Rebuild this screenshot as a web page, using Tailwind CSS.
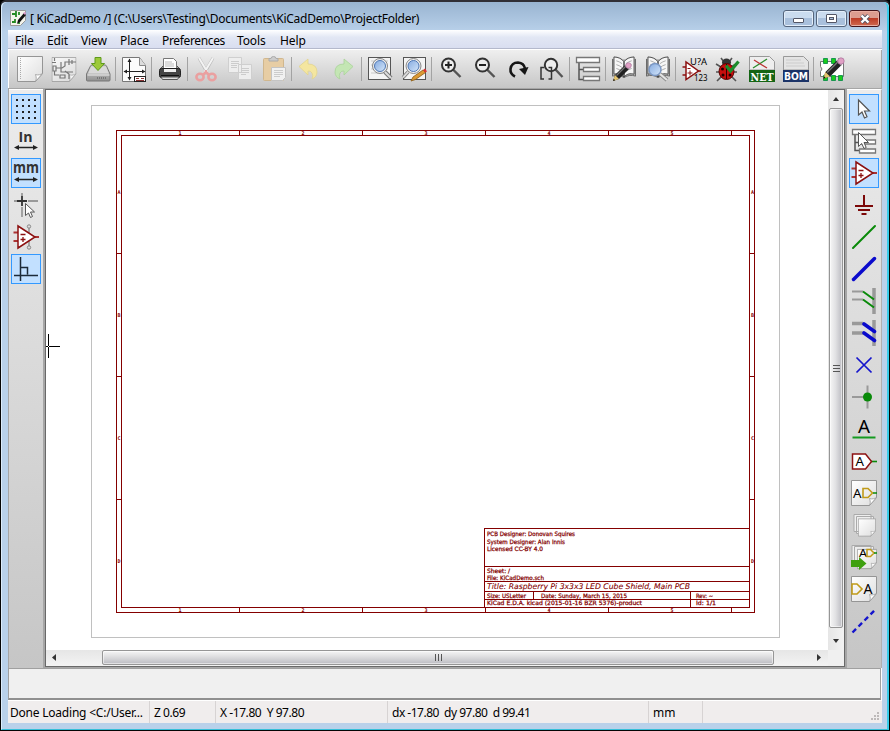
<!DOCTYPE html>
<html lang="en">
<head>
<meta charset="utf-8">
<title>[ KiCadDemo /]</title>
<script src="https://cdn.jsdelivr.net/npm/@tailwindcss/browser@4"></script>
</head>
<body class="w-[890px] h-[731px] overflow-hidden bg-black font-['Noto_Sans','Open_Sans',sans-serif] text-[12px] leading-4 text-black">
<svg width="0" height="0" class="absolute">
  <defs>
    <linearGradient id="pg" x1="0" y1="0" x2="1" y2="1"><stop offset="0" stop-color="#fff"/><stop offset="1" stop-color="#dedede"/></linearGradient>
    <linearGradient id="lens" x1="0" y1="0" x2="1" y2="1"><stop offset="0" stop-color="#86abe0"/><stop offset="1" stop-color="#d4e6fa"/></linearGradient>
    <linearGradient id="metal" x1="0" y1="0" x2="0" y2="1"><stop offset="0" stop-color="#d8d8d8"/><stop offset="1" stop-color="#909090"/></linearGradient>
    <symbol id="page" viewBox="0 0 26 26"><path d="M.5.5h25v17l-7 8H.5z" fill="url(#pg)" stroke="#959595"/><path d="M18.500 25.500c1-2 1-4 0-7 3 1 5 0 7-1z" fill="#fff" stroke="#999" stroke-width=".8"/></symbol>
    <symbol id="pencil" viewBox="0 0 20 20"><path d="M1 19l2-6 10-10 4 4L7 17z" fill="#222"/><path d="M4.500 13.500L13.500 4.500" stroke="#777" stroke-width="1.200"/><path d="M1 19l2-6 4 4z" fill="#e4c46e"/><path d="M1 19l.8-2.200 1.400 1.400z" fill="#111"/><path d="M12.500 3.500l4 4 1-1-4-4z" fill="#999"/><circle cx="16.500" cy="3.500" r="2.800" fill="#e0a0c4" stroke="#a8709a" stroke-width=".6"/></symbol>
    <symbol id="opamp" viewBox="0 0 26 26"><path d="M.5 8.500h5M.5 17h5M21 13h5" stroke="#a33" stroke-width="2"/><path d="M5 2v22L22 13z" fill="#fff" stroke="#8c1111" stroke-width="1.500"/><path d="M7.500 10.500h5M7.500 15.500h5M10 13v5" stroke="#8c1111" stroke-width="1.300"/></symbol>
    <symbol id="book" viewBox="0 0 26 24"><path d="M1 3v18c4-1.500 8-1 12 1.500 4-2.500 8-3 12-1.500V3" fill="#bbb" stroke="#666"/><path d="M2.500 1C7 1 11 3 13 6v16C10 18.500 6.500 18 2.500 19zM23.500 1C19 1 15 3 13 6v16c3-3.500 6.500-4 10.500-3z" fill="#f6f6f6" stroke="#444"/><path d="M5 5c2 .5 4 1.500 6 3M5 9c2 .5 4 1.500 6 3M5 13c2 .5 4 1.500 6 3M21 5c-2 .5-4 1.500-6 3M21 9c-2 .5-4 1.500-6 3M21 13c-2 .5-4 1.500-6 3" fill="none" stroke="#aaa"/></symbol>
  </defs>
</svg>

<div class="w-[890px] h-[731px] flex flex-col rounded-t-md border border-[#050505] border-t-[#302f36] border-t-2 bg-[#b9d1ea] overflow-hidden">
  <div class="flex-1 min-h-0 flex flex-col border-l border-[#dcecfb] border-r-2 border-r-[#38cdea] border-b border-b-[#35bfd8] rounded-t-md bg-linear-to-b from-[#99b4d1] to-[#b9d1ea] to-[30px] overflow-hidden">

    <!-- Title bar -->
    <header class="h-7 shrink-0 flex items-start pl-2">
      <svg class="mt-[8px]" width="16" height="16" viewBox="0 0 16 16"><path d="M.5.500h15v10l-5 5H.5z" fill="#f4f4ec" stroke="#999"/><path d="M2 4h4v3M6 3V1M2 12h3V9M9 14v-3M9 2v3" fill="none" stroke="#238a23" stroke-width="1.800"/><path d="M7 14l1-4 6-7 2 2-6 7z" fill="#111"/><path d="M13 3l2 2 1-2-1-1z" fill="#d9c"/></svg>
      <span class="mt-[9px] ml-[4px] text-[12px] whitespace-pre tracking-[-0.26px]">[ KiCadDemo /] (C:\Users\Testing\Documents\KiCadDemo\ProjectFolder)</span>
      <div class="ml-auto mt-[8px] mr-[7px] flex gap-[2px]">
        <div class="w-[31px] h-[17px] rounded-[3px] border border-[#55657c] bg-linear-to-b from-[#cbdcef] from-50% to-[#a9c0dc] to-50% shadow-[inset_0_0_0_1px_#e3eefa] flex items-center justify-center"><i class="block mt-1 w-[11px] h-[5px] rounded-[1px] bg-white border border-[#535666]"></i></div>
        <div class="w-[31px] h-[17px] rounded-[3px] border border-[#55657c] bg-linear-to-b from-[#cbdcef] from-50% to-[#a9c0dc] to-50% shadow-[inset_0_0_0_1px_#e3eefa] flex items-center justify-center"><i class="block w-[11px] h-[9px] rounded-[1px] bg-white border border-[#535666] p-[2px]"><b class="block w-[5px] h-[3px] border border-[#535666] bg-[#a9c0dc]"></b></i></div>
        <div class="w-[31px] h-[17px] rounded-[3px] border border-[#43141a] bg-linear-to-b from-[#dc9d90] from-45% via-[#bd3c26] via-50% to-[#cf6a50] shadow-[inset_0_0_0_1px_#e9b0a4] flex items-center justify-center"><svg width="12" height="10" viewBox="0 0 12 10"><path d="M2.500 1.500l7 7M9.500 1.500l-7 7" stroke="#535666" stroke-width="4"/><path d="M2.500 1.500l7 7M9.500 1.500l-7 7" stroke="#fff" stroke-width="2.400"/></svg></div>
      </div>
    </header>

    <main class="ml-[6px] mr-[5px] mb-[6px] flex-1 min-h-0 flex flex-col bg-white">
      <!-- Menu bar -->
      <nav class="h-[19px] shrink-0 flex pl-[7px] pt-[2px] bg-linear-to-b from-white via-[#e2e7f4] via-40% to-[#d9def0] border-b border-[#b4b9cc] whitespace-nowrap leading-[17px] tracking-[-0.12px]">
        <span class="w-[32px]">File</span><span class="w-[34px]">Edit</span><span class="w-[39px]">View</span><span class="w-[42px]">Place</span><span class="w-[75px] tracking-[-0.35px]">Preferences</span><span class="w-[43px]">Tools</span><span>Help</span>
      </nav>
      <!-- Top toolbar -->
      <div class="h-[38px] mt-[1px] ml-px shrink-0 flex items-center pl-1 bg-linear-to-b from-[#efefef] to-[#c6c6c6] border-r border-[#a8a8a8]">
        <svg class="mx-1" width="26" height="26" viewBox="17 56 26 26"><use href="#page" x="17" y="56" width="26" height="26"/><path d="M20.500 58v22" stroke="#aaa" stroke-dasharray="1 1"/></svg>
        <svg class="mx-1" width="26" height="26" viewBox="51 56 26 26"><g opacity=".75"><use href="#page" x="51.500" y="57" width="25" height="25"/><path d="M52 62.500h4M54.500 58v3M53 66h3v5h-3zM54.500 71v4H59M56 68h6l3-2v-4h4M60 75h5v3h-5zM65 71l4 3v5M69 59v6M72 60v4M69 62h7M61 62v10h12" fill="none" stroke="#555" stroke-width="1.200"/></g></svg>
        <svg class="mx-1" width="26" height="26" viewBox="85 56 26 26"><path d="M86.500 74l4-8q.5-1 1.500-1h13q1 0 1.500 1l3.500 8v6q0 1-1 1h-21.500q-1 0-1-1z" fill="url(#metal)" stroke="#777"/><path d="M88 73.500h21l-3-6.500H91z" fill="#d9d9d9"/><path d="M87.500 75h22" stroke="#eee"/><path d="M97 78h10" stroke="#777" stroke-dasharray="1 1" stroke-width="2"/><path d="M95 57.500h6v6h3.500L98 70.500l-6.500-7H95z" fill="#9cc93a" stroke="#5f9a1c"/></svg>
        <i class="w-[2px] h-6 border-l border-[#a3a3a3]"></i>
        <svg class="mx-1" width="26" height="26" viewBox="121 56 26 26"><path d="M122.500 57.500h17l6 8v16h-23z" fill="#fcfcfc" stroke="#777"/><path d="M139.500 57.500v8h6" fill="#ddd" stroke="#888"/><path d="M129.500 59v20M124 71.500h21" stroke="#222"/><path d="M127.500 62l2-3.500 2 3.500zM127.500 77l2 3.500 2-3.500zM127 69.500l-3.500 2 3.500 2zM142 69.500l3.500 2-3.500 2z" fill="#222"/><rect x="134.500" y="76.500" width="11" height="5" fill="#fff" stroke="#222"/><path d="M136 78.500h3M141 78.500h3M136 80.500h8" stroke="#833"/></svg>
        <i class="w-[2px] h-6 border-l border-[#a3a3a3]"></i>
        <svg class="mx-1" width="26" height="26" viewBox="157 56 26 26"><path d="M160 69l3-3h14l3 3" fill="#999" stroke="#555"/><path d="M163.500 58.500h10l3 3V70h-13z" fill="#fff" stroke="#777"/><path d="M165 62h7M165 64h9M165 66h9" stroke="#bbb"/><rect x="159.500" y="68.500" width="21" height="9" rx="2" fill="#444" stroke="#222"/><rect x="164" y="69" width="12" height="3" fill="#eee"/><path d="M161 77h18l-1.500 2.500h-15z" fill="#ddd" stroke="#555"/><path d="M161 75.500h18" stroke="#111"/></svg>
        <i class="w-[2px] h-6 border-l border-[#a3a3a3]"></i>
        <svg class="mx-1" width="26" height="26" viewBox="193 56 26 26"><path d="M199 58l9 16M213 58l-9 16" stroke="#bbb" stroke-width="3"/><path d="M199 58l9 15M213 58l-9 15" stroke="#f3f3f3" stroke-width="2"/><g fill="none" stroke="#eaa0a0" stroke-width="2.600"><ellipse cx="200" cy="77" rx="3.600" ry="3.200"/><ellipse cx="212" cy="77" rx="3.600" ry="3.200"/><path d="M203 75l4-4M209 75l-4-4"/></g></svg>
        <svg class="mx-1" width="26" height="26" viewBox="227 56 26 26"><g fill="#eee" stroke="#cfcfcf"><path d="M228.500 57.500h13v15h-13zM238.500 64.500h13v15h-13z"/></g><path d="M231 61.500h8M231 63.500h8M231 65.500h6M231 67.500h6M241 68.500h8M241 70.500h8M241 72.500h8M241 74.500h5" stroke="#ccc"/></svg>
        <svg class="mx-1" width="26" height="26" viewBox="261 56 26 26"><rect x="263.500" y="58.500" width="20" height="22" rx="1" fill="#e7cda4" stroke="#d0b78e"/><path d="M269 61v-2.500h2q0-2 2.500-2t2.500 2h2V61z" fill="#ccc" stroke="#aaa"/><path d="M271.500 67.500h14v10l-3 3h-11z" fill="#f1f1f1" stroke="#c4c4c4"/><path d="M274 70.500h9M274 72.500h9M274 74.500h9M274 76.500h6" stroke="#ccc"/></svg>
        <i class="w-[2px] h-6 border-l border-[#a3a3a3]"></i>
        <svg class="mx-1" width="26" height="26" viewBox="297 56 26 26"><path d="M299 66.500l9-7.500v5q9 0 9 8 0 5-5 7 1.500-3.500 0-6-1.500-2.500-4-2v4z" fill="#f4e6a0" stroke="#e2d48e" stroke-width=".8"/></svg>
        <svg class="mx-1" width="26" height="26" viewBox="331 56 26 26"><path d="M353 66.500l-9-7.500v5q-9 0-9 8 0 5 5 7-1.500-3.500 0-6 1.500-2.500 4-2v4z" fill="#c4e6b4" stroke="#aad39b" stroke-width=".8"/></svg>
        <i class="w-[2px] h-6 border-l border-[#a3a3a3]"></i>
        <svg class="mx-1" width="26" height="26" viewBox="367 56 26 26"><rect x="368.500" y="57.500" width="22" height="22" fill="#f4f4f4" stroke="#555"/><path d="M371 61h17M371 65h17M371 69h17M371 73h17" stroke="#ccc"/><path d="M385 72l6 6" stroke="#777" stroke-width="4"/><path d="M385 72l6 6" stroke="#ddd" stroke-width="2"/><circle cx="380" cy="66" r="7.500" fill="#eee" stroke="#888"/><circle cx="380" cy="66" r="5.500" fill="url(#lens)" stroke="#5078b4"/></svg>
        <svg class="mx-1" width="26" height="26" viewBox="401 56 26 26"><rect x="403.500" y="57.500" width="22" height="22" fill="#f4f4f4" stroke="#555"/><path d="M408 72l-5 5.500" stroke="#888" stroke-width="3.500"/><path d="M408 72l-5 5.500" stroke="#ddd" stroke-width="1.800"/><circle cx="413.500" cy="66" r="7.500" fill="#eee" stroke="#888"/><circle cx="413.500" cy="66" r="5.500" fill="url(#lens)" stroke="#5078b4"/><path d="M411 81l2-4 10-7 2.500 2.500-10 7z" fill="#dc9a34" stroke="#8a5a14" stroke-width=".8"/><path d="M423 70l2-1.500 2 3-2 1z" fill="#d33"/></svg>
        <i class="w-[2px] h-6 border-l border-[#a3a3a3]"></i>
        <svg class="mx-1" width="26" height="26" viewBox="437 56 26 26"><path d="M453 69.500l7.500 7.500" stroke="#555" stroke-width="2.400"/><circle cx="448.500" cy="65" r="6.500" fill="#eee" stroke="#333" stroke-width="2"/><path d="M445 65h7M448.500 61.500v7" stroke="#222" stroke-width="2"/></svg>
        <svg class="mx-1" width="26" height="26" viewBox="471 56 26 26"><path d="M487 69.500l7.500 7.500" stroke="#555" stroke-width="2.400"/><circle cx="482.500" cy="65" r="6.500" fill="#eee" stroke="#333" stroke-width="2"/><path d="M479 65h7" stroke="#222" stroke-width="2"/></svg>
        <svg class="mx-1" width="26" height="26" viewBox="505 56 26 26"><path d="M515 76.500q-5-2.500-4.500-7.500 1-6.500 7.500-6.500 6 .5 7 6" fill="none" stroke="#161616" stroke-width="2.600"/><path d="M519 69l9.500-2-3.500 8z" fill="#161616"/></svg>
        <svg class="mx-1" width="26" height="26" viewBox="539 56 26 26"><path d="M555.500 69.500l7 7.500" stroke="#555" stroke-width="2.400"/><circle cx="551" cy="65" r="6.200" fill="#eee" stroke="#333" stroke-width="2"/><path d="M544 67.500h-3v11.500h3M548.500 67.500h3v11.500h-3" fill="none" stroke="#333" stroke-width="1.500"/></svg>
        <i class="w-[2px] h-6 border-l border-[#a3a3a3]"></i>
        <svg class="mx-1" width="26" height="26" viewBox="575 56 26 26"><path d="M579 62v17.500h5M579 69.500h5" fill="none" stroke="#555" stroke-width="1.500"/><path d="M576.500 57.500h23v5h-23zM583.500 67.500h16v4h-16zM583.500 76.500h16v4h-16z" fill="#fff" stroke="#777" stroke-width="1.300"/></svg>
        <i class="w-[2px] h-6 border-l border-[#a3a3a3]"></i>
        <svg class="mx-1" width="26" height="26" viewBox="611 56 26 26"><use href="#book" x="611" y="56" width="26" height="23"/><use href="#pencil" x="612" y="62" width="20" height="20"/></svg>
        <svg class="mx-1" width="26" height="26" viewBox="645 56 26 26"><use href="#book" x="645" y="56" width="26" height="23"/><path d="M660 74l7 6" stroke="#888" stroke-width="4"/><path d="M660 74l7 6" stroke="#e4e4e4" stroke-width="2.200"/><circle cx="655" cy="69.500" r="6" fill="url(#lens)" stroke="#7c98c4" stroke-width="1.500"/></svg>
        <i class="w-[2px] h-6 border-l border-[#a3a3a3]"></i>
        <svg class="mx-1 overflow-visible" width="26" height="26" viewBox="681 56 26 26"><path d="M682.500 67h4M682.500 75h4M698 71h3" stroke="#8c1111" stroke-width="1.500"/><path d="M686 62v17.500L698.500 71z" fill="#fff" stroke="#8c1111" stroke-width="1.500"/><path d="M687.500 68.500h3M687.500 73h5M690 70.500v5" stroke="#8c1111"/><text x="690" y="65" font-size="9.500" textLength="17" lengthAdjust="spacingAndGlyphs">U?A</text><text x="694" y="81" font-size="9.500" textLength="13.500" lengthAdjust="spacingAndGlyphs">123</text></svg>
        <svg class="mx-1 overflow-visible" width="26" height="26" viewBox="715 56 26 26"><path d="M721 58l3 4M732 58l-3 4M716 64l5 3M716 72h5M717 81l5-5M736 64l-5 3M737 72h-5M736 81l-5-5" stroke="#555" stroke-width="1.600"/><ellipse cx="726.500" cy="62.500" rx="4.500" ry="4" fill="#333"/><ellipse cx="726.500" cy="71.500" rx="7.500" ry="8" fill="#c80d0d" stroke="#500"/><path d="M726.500 64v15" stroke="#300"/><g fill="#200"><circle cx="722.500" cy="69" r="1.500"/><circle cx="723" cy="75" r="1.500"/><circle cx="730" cy="75" r="1.500"/></g><path d="M726 65.500l4.500 5.500 8-9.500" fill="none" stroke="#1c8c2c" stroke-width="3.200"/></svg>
        <svg class="mx-1 overflow-visible" width="26" height="26" viewBox="749 56 26 26"><path d="M749.500 70v-13.500h20l5 5V70z" fill="#eee" stroke="#999"/><path d="M753 68l14-9" stroke="#2c8c2c" stroke-width="1.300"/><path d="M754 60l13 8" stroke="#b33" stroke-width="1.300"/><rect x="749" y="70" width="26" height="12" fill="#146414"/><text x="750.500" y="80.500" font-family="DejaVu Serif" font-weight="bold" font-size="11.500" fill="#fff" textLength="23" lengthAdjust="spacingAndGlyphs">NET</text></svg>
        <svg class="mx-1 overflow-visible" width="26" height="26" viewBox="783 56 26 26"><path d="M783.500 70v-13.500h20l5 5V70z" fill="#e4e4e4" stroke="#999"/><path d="M786 60h15M786 63h18M786 66h19" stroke="#ccc"/><rect x="783" y="70" width="26" height="12" fill="#1c3468"/><text x="784" y="80" font-family="DejaVu Sans" font-weight="bold" font-size="11" fill="#fff" textLength="24" lengthAdjust="spacingAndGlyphs">BOM</text></svg>
        <i class="w-[2px] h-6 border-l border-[#a3a3a3]"></i>
        <svg class="mx-1" width="26" height="26" viewBox="819 56 26 26"><path d="M820.500 61.500h23v15h-23v-5q3-2.500 0-5z" fill="#fff" stroke="#777"/><g fill="#1acc1a" stroke="#084" stroke-width=".8"><path d="M823.500 58.500h4v5h-4zM831.500 58.500h4v5h-4zM838.500 58.500h4v5h-4zM823.500 75.500h4v5h-4zM831.500 75.500h4v5h-4zM838.500 75.500h4v5h-4z"/></g><use href="#pencil" x="822" y="57" width="23" height="23"/></svg>
      </div>

      <!-- Work area -->
      <div class="flex h-[580px] shrink-0 pl-px bg-[#a6a6a6]">
        <!-- Left toolbar -->
        <aside class="w-[34px] mt-[1px] flex flex-col gap-[2px] pl-[2px] pt-[4px] bg-linear-to-b from-[#ececec] to-[#c6c6c6] border-t border-white">
          <div class="size-[30px] shrink-0 border border-[#3399ff] bg-[#c2e0ff] p-px"><svg width="26" height="26" viewBox="13 96 26 26"><path d="M16 100h21M16 106h21M16 112h21M16 118h21" stroke="#222" stroke-width="2" stroke-dasharray="2 4"/></svg></div>
          <div class="size-[30px] shrink-0 p-[2px]"><svg class="overflow-visible" width="26" height="26" viewBox="13 128 26 26"><text x="18.500" y="142" font-family="Open Sans" font-weight="bold" font-size="15" fill="#333" textLength="14" lengthAdjust="spacingAndGlyphs">In</text><path d="M17 147.500h18" stroke="#222" stroke-width="1.400"/><path d="M14 147.500l5-2.500v5zM38 147.500l-5-2.500v5z" fill="#222"/></svg></div>
          <div class="size-[30px] shrink-0 border border-[#3399ff] bg-[#c2e0ff] p-px"><svg class="overflow-visible" width="26" height="26" viewBox="13 160 26 26"><text x="13" y="173" font-family="Open Sans" font-weight="bold" font-size="16" fill="#333" textLength="26" lengthAdjust="spacingAndGlyphs">mm</text><path d="M17 179.500h18" stroke="#222" stroke-width="1.400"/><path d="M14 179.500l5-2.500v5zM38 179.500l-5-2.500v5z" fill="#222"/></svg></div>
          <div class="size-[30px] shrink-0 p-[2px]"><svg width="26" height="26" viewBox="13 192 26 26"><path d="M14 201h3M28 201h10M22 193v3M22 207v10" stroke="#999" stroke-width="1.800"/><path d="M17 201h10M22 196v10" stroke="#333" stroke-width="1.800"/><path d="M25.500 203.500v12l3-2.500 2 4.500 2-1-2-4.500h4z" fill="#fff" stroke="#555"/></svg></div>
          <div class="size-[30px] shrink-0 p-[2px]"><svg width="26" height="26" viewBox="13 224 26 26"><path d="M29 226v22" stroke="#999" stroke-width="1.600"/><circle cx="29" cy="226.500" r="1.700" fill="#ddd" stroke="#888"/><circle cx="29" cy="247.500" r="1.700" fill="#ddd" stroke="#888"/><use href="#opamp" x="13" y="224" width="26" height="26"/></svg></div>
          <div class="size-[30px] shrink-0 border border-[#3399ff] bg-[#c2e0ff] p-px"><svg width="26" height="26" viewBox="13 256 26 26"><path d="M20.500 257v24M14 275.500h24M21 267.500h6.500v7" fill="none" stroke="#1c2a38" stroke-width="1.500"/></svg></div>
        </aside>

        <!-- Drawing view with its scroll bars -->
        <section class="ml-[2px] mt-[1px] w-[800px] shrink-0 h-[578px] border border-[#696969] bg-[#f0f0f0] flex flex-wrap content-start">
          <svg class="bg-white shrink-0" width="782" height="560" viewBox="46 90 782 560" shape-rendering="crispEdges">
            <path d="M91.500 105.500h688v532h-688z" fill="none" stroke="#c0c0c0"/>
            <g fill="none" stroke="#840000"><path d="M116.500 130.500h638v482h-638zM121.500 135.500h628v472h-628z"/>
            <path d="M239.500 130v5M362.500 130v5M485.500 130v5M608.500 130v5M731.500 130v5M239.500 608v5M362.500 608v5M485.500 608v5M608.500 608v5M731.500 608v5M116 253.500h5M116 376.500h5M116 499.500h5M750 253.500h5M750 376.500h5M750 499.500h5"/>
            <path d="M484.500 607V528.500H750M484 566.500h266M484 581.500h266M484 591.500h266M484 599.500h266M533.500 591v8M690.500 591v16"/></g>
            <g fill="#840000" font-family="DejaVu Sans Mono" font-weight="bold" font-size="5" text-anchor="middle"><text x="180" y="135">1</text><text x="303" y="135">2</text><text x="426" y="135">3</text><text x="549" y="135">4</text><text x="672" y="135">5</text><text x="180" y="612">1</text><text x="303" y="612">2</text><text x="426" y="612">3</text><text x="549" y="612">4</text><text x="672" y="612">5</text><text x="119" y="194">A</text><text x="119" y="317">B</text><text x="119" y="440">C</text><text x="119" y="563">D</text><text x="752.500" y="194">A</text><text x="752.500" y="317">B</text><text x="752.500" y="440">C</text><text x="752.500" y="563">D</text></g>
            <g fill="#840000" stroke="#840000" stroke-width=".25" font-family="DejaVu Sans" font-size="6">
              <text x="487" y="536" textLength="88" lengthAdjust="spacingAndGlyphs">PCB Designer: Donovan Squires</text>
              <text x="487" y="543.500" textLength="78" lengthAdjust="spacingAndGlyphs">System Designer: Alan Innis</text>
              <text x="487" y="550.500" textLength="56" lengthAdjust="spacingAndGlyphs">Licensed CC-BY 4.0</text>
              <text x="487" y="573" textLength="23" lengthAdjust="spacingAndGlyphs">Sheet: /</text>
              <text x="487" y="579.500" textLength="57" lengthAdjust="spacingAndGlyphs">File: KiCadDemo.sch</text>
              <text x="487" y="589" font-size="7.800" stroke-width=".1" font-style="italic" textLength="203" lengthAdjust="spacingAndGlyphs">Title: Raspberry Pi 3x3x3 LED Cube Shield, Main PCB</text>
              <text x="487" y="598" textLength="39" lengthAdjust="spacingAndGlyphs">Size: USLetter</text>
              <text x="541" y="598" textLength="86" lengthAdjust="spacingAndGlyphs">Date: Sunday, March 15, 2015</text>
              <text x="696" y="598" textLength="17" lengthAdjust="spacingAndGlyphs">Rev: ~</text>
              <text x="487" y="605" textLength="155" lengthAdjust="spacingAndGlyphs">KiCad E.D.A.  kicad (2015-01-16 BZR 5376)-product</text>
              <text x="696" y="605" textLength="20" lengthAdjust="spacingAndGlyphs">Id: 1/1</text>
            </g>
            <path d="M46 346.500h2M49 346.500h11M48.500 334v12M48.500 347v11" stroke="#000"/>
          </svg>
          <div class="w-[16px] h-[560px] flex flex-col items-center bg-linear-to-r from-[#e6e6e6] to-[#f3f3f3]">
            <svg class="shrink-0" width="16" height="18"><path d="M5 11l3-4 3 4z" fill="#333"/></svg>
            <div class="w-[14px] h-[520px] rounded-[2px] border border-[#969696] bg-linear-to-r from-[#f6f6f6] via-[#e2e2e4] via-45% to-[#bcbcc2] shadow-[inset_0_0_0_1px_#fff8] flex flex-col items-center justify-center gap-[2px]"><i class="w-[7px] h-px bg-[#555]"></i><i class="w-[7px] h-px bg-[#555]"></i><i class="w-[7px] h-px bg-[#555]"></i></div>
            <svg class="shrink-0" width="16" height="22"><path d="M5 11l3 4 3-4z" fill="#333"/></svg>
          </div>
          <div class="w-[782px] h-4 flex bg-linear-to-b from-[#e6e6e6] to-[#f3f3f3]">
            <svg class="shrink-0" width="56" height="16"><path d="M10 4v7L6 7.500z" fill="#333"/></svg>
            <div class="w-[672px] h-[15px] rounded-[2px] border border-[#969696] bg-linear-to-b from-[#f6f6f6] via-[#dddddf] via-45% to-[#bcbcc2] shadow-[inset_0_0_0_1px_#fff8] flex items-center justify-center gap-[2px]"><i class="w-px h-[7px] bg-[#555]"></i><i class="w-px h-[7px] bg-[#555]"></i><i class="w-px h-[7px] bg-[#555]"></i></div>
            <svg class="shrink-0" width="54" height="16"><path d="M43 4v7l4-3.500z" fill="#333"/></svg>
          </div>
        </section>

        <!-- Right toolbar -->
        <aside class="ml-[2px] flex-1 mt-[1px] flex flex-col gap-[2px] pl-[2px] pt-[4px] bg-linear-to-b from-[#ececec] to-[#c6c6c6] border-t border-white border-r border-r-[#b0b0b0]">
          <div class="size-[30px] shrink-0 border border-[#3399ff] bg-[#c2e0ff] p-px"><svg width="26" height="26" viewBox="851 96 26 26"><path d="M858.500 100v15l3.500-3 2.500 6 2.500-1.200-2.500-5.800h5z" fill="#fff" stroke="#555" stroke-width="1.200"/></svg></div>
          <div class="size-[30px] shrink-0 p-[2px]"><svg width="26" height="26" viewBox="851 128 26 26"><path d="M855 134v16.500h4M855 142.500h4" fill="none" stroke="#555" stroke-width="1.500"/><path d="M852.500 129.500h23v5h-23zM859.500 140h16v4h-16zM859.500 149h16v4h-16z" fill="#fff" stroke="#777" stroke-width="1.300"/><path d="M858.500 132.500v14l3.200-3 2.300 5 2.200-1-2.200-5h4.500z" fill="#fff" stroke="#555"/></svg></div>
          <div class="size-[30px] shrink-0 border border-[#3399ff] bg-[#c2e0ff] p-px"><svg width="26" height="26"><use href="#opamp" width="26" height="26"/></svg></div>
          <div class="size-[30px] shrink-0 p-[2px]"><svg width="26" height="26" viewBox="851 192 26 26"><path d="M864 195v11M855 206h18M858 210h12M861.500 214h5" stroke="#7c0808" stroke-width="2"/></svg></div>
          <div class="size-[30px] shrink-0 p-[2px]"><svg width="26" height="26" viewBox="851 224 26 26"><path d="M853 248l22-22" stroke="#098a09" stroke-width="2" stroke-linecap="round"/></svg></div>
          <div class="size-[30px] shrink-0 p-[2px]"><svg width="26" height="26" viewBox="851 256 26 26"><path d="M853.500 279.500l21-21" stroke="#0a0acc" stroke-width="3.500" stroke-linecap="round"/></svg></div>
          <div class="size-[30px] shrink-0 p-[2px]"><svg width="26" height="26" viewBox="851 288 26 26"><path d="M874 288v26" stroke="#999" stroke-width="3.500"/><path d="M852 291.500h11M852 299.500h11" stroke="#999" stroke-width="2"/><path d="M863 291.500l11 8M863 299.500l11 8" stroke="#098a09" stroke-width="2"/></svg></div>
          <div class="size-[30px] shrink-0 p-[2px]"><svg width="26" height="26" viewBox="851 320 26 26"><path d="M874 320v26" stroke="#999" stroke-width="3.500"/><path d="M852 323.500h11M852 333h11" stroke="#999" stroke-width="3.500"/><path d="M864 324l10.500 7.500M864 333l10.500 7.500" stroke="#0a0acc" stroke-width="3.600" stroke-linecap="round"/></svg></div>
          <div class="size-[30px] shrink-0 p-[2px]"><svg width="26" height="26" viewBox="851 352 26 26"><path d="M856.500 357.500l15 15M871.500 357.500l-15 15" stroke="#1414cc" stroke-width="1.700"/></svg></div>
          <div class="size-[30px] shrink-0 p-[2px]"><svg width="26" height="26" viewBox="851 384 26 26"><path d="M852 397h15M867.500 385.500v23" stroke="#999" stroke-width="2"/><circle cx="867.500" cy="397" r="4.500" fill="#098a09"/></svg></div>
          <div class="size-[30px] shrink-0 p-[2px]"><svg class="overflow-visible" width="26" height="26" viewBox="851 416 26 26"><text x="858" y="433" font-size="18" textLength="12" lengthAdjust="spacingAndGlyphs">A</text><path d="M852.500 437.500h23" stroke="#149a20" stroke-width="2"/></svg></div>
          <div class="size-[30px] shrink-0 p-[2px]"><svg class="overflow-visible" width="26" height="26" viewBox="851 448 26 26"><path d="M871 461.500h6" stroke="#098a09" stroke-width="1.600"/><path d="M852.500 454h13l6 7.500-6 7.500h-13z" fill="#fff" stroke="#8c1111" stroke-width="1.500"/><text x="855.500" y="466" font-size="12.500" textLength="8.500" lengthAdjust="spacingAndGlyphs">A</text></svg></div>
          <div class="size-[30px] shrink-0 p-[2px]"><svg class="overflow-visible" width="26" height="26" viewBox="851 480 26 26"><use href="#page" x="851" y="480" width="26" height="26"/><text x="853" y="497.500" font-size="12.500" textLength="8.500" lengthAdjust="spacingAndGlyphs">A</text><path d="M863 488.500h5l4.500 4.500-4.500 4.500h-5z" fill="none" stroke="#c09a18" stroke-width="1.600"/><path d="M873 493h4" stroke="#098a09" stroke-width="1.500"/></svg></div>
          <div class="size-[30px] shrink-0 p-[2px]"><svg width="26" height="26" viewBox="851 512 26 26"><path d="M854 514.500h17v17h-17zM856.500 516.500h17v17h-17z" fill="#eee" stroke="#aaa"/><use href="#page" x="858" y="518" width="18" height="19"/></svg></div>
          <div class="size-[30px] shrink-0 p-[2px]"><svg class="overflow-visible" width="26" height="26" viewBox="851 544 26 26"><path d="M852 545.500h19v19h-19zM854.500 546.500h19v19h-19z" fill="#eee" stroke="#aaa"/><use href="#page" x="857" y="548" width="20" height="22"/><text x="859" y="557" font-size="11" textLength="8" lengthAdjust="spacingAndGlyphs">A</text><path d="M867 549.500h3.500l3.500 3.500-3.500 3.500H867z" fill="none" stroke="#c09a18" stroke-width="1.500"/><path d="M874 553h3" stroke="#098a09" stroke-width="1.500"/><path d="M851 560h8v-3l7.500 6.500-7.500 6.500v-3h-8z" fill="#3fa010"/></svg></div>
          <div class="size-[30px] shrink-0 p-[2px]"><svg class="overflow-visible" width="26" height="26" viewBox="851 576 26 26"><use href="#page" x="851" y="576" width="26" height="26"/><path d="M852 584h5l5 5-5 5h-5z" fill="none" stroke="#c09a18" stroke-width="1.600"/><text x="863.500" y="593.500" font-size="13.500" textLength="9" lengthAdjust="spacingAndGlyphs">A</text></svg></div>
          <div class="size-[30px] shrink-0 p-[2px]"><svg width="26" height="26" viewBox="851 608 26 26"><path d="M852.500 632.500l23-23" stroke="#1414cc" stroke-width="2.400" stroke-dasharray="5 3.500"/></svg></div>
        </aside>
      </div>

      <!-- Message panel -->
      <div class="h-[32px] shrink-0 border border-[#a0a0a0] border-b-2 border-b-[#909090] bg-[#f0f0f0] mr-px"></div>
      <!-- Status bar -->
      <footer class="mt-px flex-1 min-h-0 flex bg-[#f0eded] whitespace-pre leading-[23px] pl-[2px]">
        <span class="w-[140px] border-r border-[#d7d3d3] tracking-[-0.22px]">Done Loading &lt;C:/User...</span><span class="w-[66px] pl-[4px] border-r border-[#d7d3d3] tracking-[-0.45px]">Z 0.69</span><span class="w-[172px] pl-[4px] border-r border-[#d7d3d3] tracking-[-0.43px]">X -17.80  Y 97.80</span><span class="w-[261px] pl-[4px] border-r border-[#d7d3d3] tracking-[-0.5px]">dx -17.80  dy 97.80  d 99.41</span><span class="w-[54px] pl-[4px] border-r border-[#d7d3d3]">mm</span>
        <svg class="ml-auto mr-[2px] mt-[11px]" width="10" height="10"><path d="M7 0h2v2H7zM7 3h2v2H7zM7 6h2v2H7zM4 3h2v2H4zM4 6h2v2H4zM1 6h2v2H1z" fill="#bdb9b9"/></svg>
      </footer>
    </main>
  </div>
</div>
</body>
</html>
